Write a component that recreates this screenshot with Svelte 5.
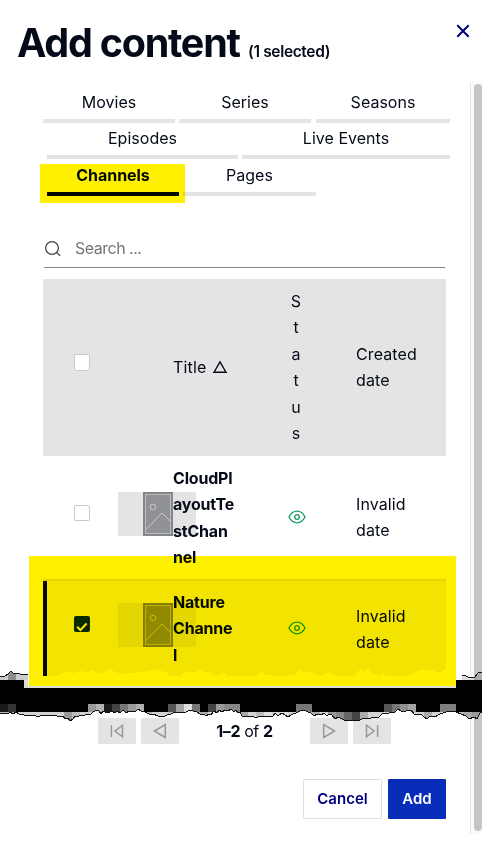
<script>
  const tabRows = [
    [{ label: 'Movies', w: 132 }, { label: 'Series', w: 132 }, { label: 'Seasons', w: 134 }],
    [{ label: 'Episodes', w: 191 }, { label: 'Live Events', w: 208 }],
    [{ label: 'Channels', w: 132, active: true }, { label: 'Pages', w: 133 }]
  ];

  const rows = [
    { title: ['CloudPl', 'ayoutTe', 'stChan', 'nel'], created: ['Invalid', 'date'], checked: false },
    { title: ['Nature', 'Channe', 'l'], created: ['Invalid', 'date'], checked: true }
  ];

  // Torn strip: vertices of the ragged lower edge as x, y pairs.
  const lower = [0,713,6,713,8,714,10,712,13,714,16,712,19,714,24,715,27,716,30,715,36,716,40,716,44,715,48,716,53,715,57,716,60,717,63,716,65,719,68,718,70,721,73,719,75,716,79,716,85,715,88,714,91,714,93,712,97,710,99,711,101,714,103,711,107,713,112,711,115,713,117,711,120,713,123,710,126,713,129,711,132,712,136,711,138,709,141,711,145,712,149,714,153,714,158,716,163,717,167,715,171,714,175,712,180,712,186,712,190,710,193,711,197,712,201,715,204,714,206,716,209,714,211,715,214,711,217,713,219,710,222,712,225,710,228,711,231,709,234,712,236,710,238,713,240,712,242,716,248,717,253,716,255,718,262,716,267,717,273,716,275,713,278,716,282,713,285,715,288,717,293,714,296,713,300,711,304,710,308,712,311,713,314,716,317,714,321,715,324,713,327,716,329,714,332,715,335,719,338,717,344,720,352,721,360,720,364,718,368,719,374,717,379,717,383,713,387,714,391,712,395,712,398,709,401,711,406,711,411,710,414,714,418,715,421,714,424,717,427,719,430,716,435,717,440,714,446,712,452,711,456,712,461,714,466,716,469,719,474,717,477,719,480,713,482,712];
  const pairs = lower.reduce((out, v, i) => out + (i % 2 ? ',' : ' ') + v, '');
  const upperBlocks = [[0,'#191919'],[8,'#333'],[88,'#999'],[96,'#b5b5b5'],[104,'#1b1b1b'],[112,'#444'],[120,'#777'],[128,'#999'],[136,'#b0b0b0'],[168,'#555'],[176,'#a5a5a5'],[184,'#ddd'],[192,'#777'],[208,'#444'],[216,'#999'],[224,'#888'],[232,'#888'],[296,'#777'],[304,'#777'],[384,'#555'],[392,'#777'],[400,'#919191'],[408,'#a4a4a4'],[440,'#808080'],[448,'#808080']];
  const lowerBlocks = [[0,'#bbb'],[8,'#aaa'],[64,'#999'],[72,'#bbb'],[144,'#aaa'],[152,'#ccc'],[168,'#bbb'],[200,'#aaa'],[240,'#aaa'],[256,'#bbb'],[264,'#ddd'],[280,'#ddd'],[312,'#aaa'],[328,'#999'],[336,'#888'],[344,'#666'],[352,'#444'],[360,'#aaa'],[424,'#aaa'],[456,'#bbb'],[464,'#aaa'],[472,'#999']];
  const ridge = 'M47,677 L56,677 60,674 66,672 75,673 80,671 87,672 93,670 98,673 105,672 110,669 117,673 124,674 133,673 141,672 150,671 154,669 160,671 167,672 170,676 180,676 183,673 189,671 194,673 200,670 206,673 210,671 214,676 220,675 223,672 227,676 255,676 258,673 262,672 266,675 273,675 278,677 294,675 298,671 301,669 304,673 310,671 314,674 321,676 325,674 329,672 333,675 354,677 358,671 361,669 364,672 368,669 373,674 380,675 383,673 387,676 408,676 414,673 420,670 433,670 436,673 441,672 446,669 V678 H47Z';
</script>

{#snippet eye()}
  <svg class="eye" width="18" height="14" viewBox="0 0 18 14"><path d="M1 7C2.5 4 5.2 1.2 9 1.2S15.5 4 17 7c-1.5 3-4.2 5.8-8 5.8S2.5 10 1 7Z" /><circle cx="9" cy="7" r="2.3" /></svg>
{/snippet}

{#snippet picture()}
  <div class="thumb">
    <svg width="30" height="44" viewBox="0 0 30 44"><rect width="30" height="44" fill="#85868a" /><rect x="2.5" y="2.5" width="25" height="39" fill="#919296" stroke="#bbbcbe" /><circle cx="10" cy="15" r="2.8" fill="none" stroke="#c9cacb" /><path d="M3 37.5 19 21l8 8" fill="none" stroke="#c9cacb" /></svg>
  </div>
{/snippet}

{#snippet arrow(back, bar)}
  <button class="page-btn" aria-label={back ? 'back' : 'forward'}>
    <svg width="20" height="16" viewBox="0 0 20 16" class:flip={!back}>
      {#if bar}<path d="M4.4 2v12M15.5 2.2v11.6L8 8Z" />{:else}<path d="M15.3 1.5v13L4.4 8Z" />{/if}
    </svg>
  </button>
{/snippet}

<div class="dialog">
  <header>
    <h1>Add content</h1><span class="count">(1 selected)</span>
    <svg class="close" width="14" height="14" viewBox="0 0 14 14"><path d="M1.3 1.3 12.7 12.7M12.7 1.3 1.3 12.7" /></svg>
  </header>
  <div class="body">
    <main>
      <nav>
        {#each tabRows as row, i}
          <div class="tabs" class:indent={i > 0}>
            {#each row as tab}<div class="tab" class:active={tab.active} style:width="{tab.w}px"><span>{tab.label}</span></div>{/each}
          </div>
        {/each}
      </nav>
      <div class="search">
        <svg width="18" height="18" viewBox="0 0 18 18"><circle cx="8" cy="8" r="6.4" /><path d="m12.7 12.7 3.5 3" /></svg>
        <span>Search ...</span>
      </div>
      <section class="table">
        <div class="row head">
          <div class="pick"><i class="box"></i></div>
          <div></div>
          <div class="heading">Title <svg width="16" height="14" viewBox="0 0 16 14"><path d="M8 1.8 14 12.2H2Z" /></svg></div>
          <div class="status">{#each 'Status'.split('') as letter}<span>{letter}</span>{/each}</div>
          <div class="date"><span>Created</span><span>date</span></div>
        </div>
        {#each rows as row}
          <div class="row item" class:selected={row.checked}>
            <div class="pick"><i class="box" class:checked={row.checked}>{#if row.checked}<svg width="16" height="16" viewBox="0 0 16 16"><path d="m3.2 10.7 3.2 3.4 6.2-6.6" /></svg>{/if}</i></div>
            <div>{@render picture()}</div>
            <div class="name">{#each row.title as part}<span>{part}</span>{/each}</div>
            <div class="visible">{@render eye()}</div>
            <div class="date"><span>{row.created[0]}</span><span>{row.created[1]}</span></div>
          </div>
        {/each}
      </section>
      <div class="pager">
        <div class="pair">{@render arrow(true, true)}{@render arrow(true, false)}</div>
        <span class="range"><b>1–2</b> of <b>2</b></span>
        <div class="pair">{@render arrow(false, false)}{@render arrow(false, true)}</div>
      </div>
      <footer><button class="cancel">Cancel</button><button class="add">Add</button></footer>
    </main>
    <div class="scroll"><div class="handle"></div></div>
  </div>

  <div class="mark tab-mark"></div>
  <div class="mark row-mark"></div>
  <svg class="tear" width="482" height="858" viewBox="0 0 482 858" shape-rendering="crispEdges">
    <defs>
      <clipPath id="strip"><polygon points="0,704 {pairs} 482,704" /></clipPath>
      <clipPath id="corners"><path d="M0 676 4 677 8 674 11 671 14 674 18 673 22 675 28 674V681H0ZM462 675 466 676 470 678 475 677 478 673 482 672V681H462Z" /></clipPath>
    </defs>
    <path d={ridge} fill="#fff000" />
    <path d="M0 680h24v8h432v-8h26v24H0Z" fill="#000" />
    <path d="M24 675h4v11h428v2H24Z" fill="#deded0" />
    <g clip-path="url(#corners)"><rect y="670" width="28" height="10" fill="#ccc" /><rect x="8" y="670" width="8" height="10" fill="#8e8e8e" /><rect x="462" y="670" width="12" height="10" fill="#ddd" /><rect x="474" y="670" width="8" height="10" fill="#aaa" /></g>
    <g clip-path="url(#strip)">
      <rect y="704" width="482" height="8" fill="#000" />
      <rect y="712" width="482" height="10" fill="#d2d2d2" />
      {#each upperBlocks as [x, fill]}<rect {x} y="704" width="8" height="8" {fill} />{/each}
      {#each lowerBlocks as [x, fill]}<rect {x} y="712" width="8" height="10" {fill} />{/each}
    </g>
    <polyline points={pairs} fill="none" stroke="#111" />
    <path d="M0 676 4 677 8 674 11 671 14 674 18 673 22 675 28 674M462 675 466 676 470 678 475 677 478 673 482 672" fill="none" stroke="#111" />
  </svg>
</div>

<style>
  :global(body) { background: #fff; overflow: hidden; }
  .dialog { position: relative; width: 482px; height: 858px; overflow: hidden; background: #fff; color: #050a18; font: 16px/26.4px Inter, "Liberation Sans", sans-serif; }
  header { height: 82px; box-sizing: border-box; padding: 19px 12px 0 17px; display: flex; align-items: baseline; white-space: nowrap; }
  h1 { margin: 0; font-size: 39.5px; line-height: 48px; font-weight: 700; letter-spacing: -1.25px; width: 223px; }
  .count { margin-left: 8px; font-size: 15.5px; font-weight: 600; letter-spacing: -0.35px; }
  .close { margin-left: auto; align-self: flex-start; margin-top: 5px; fill: none; stroke: #00007d; stroke-width: 2; }
  .body { display: flex; height: 752px; }
  main { width: 470px; box-sizing: border-box; padding: 5px 20px 0 43px; }
  .tabs { display: flex; gap: 4px; height: 36px; }
  .tabs:first-child .tab:last-child { margin-left: 1px; }
  .tabs:last-child { height: 37px; }
  .tabs.indent { padding-left: 4px; }
  .tab { box-sizing: border-box; flex: none; border-bottom: 4px solid #e4e4e4; text-align: center; padding-top: 2px; line-height: 26px; letter-spacing: 0.02px; }
  .tabs:last-child .tab { padding-top: 3px; }
  .tab.active { font-weight: 700; border-color: #050a18; letter-spacing: -0.05px; }
  .search { width: 401px; height: 37px; margin-top: 35px; margin-left: 1px; box-sizing: border-box; border-bottom: 1px solid #83858a; display: flex; align-items: center; color: #737578; }
  .search svg { margin-bottom: 1px; fill: none; stroke: #45474e; stroke-width: 1.3; }
  .search span { margin-left: 13px; margin-bottom: 2px; letter-spacing: -0.5px; }
  .table { width: 403px; height: 398px; margin-top: 11px; }
  .row { display: grid; grid-template-columns: 75px 55px 108px 75px 90px; box-sizing: border-box; }
  .row span { display: block; }
  .head { height: 177px; background: #e4e4e4; padding-top: 9px; }
  .pick { padding-left: 31px; }
  .box { display: block; box-sizing: border-box; width: 16px; height: 17px; border: 1px solid #c9c9ca; border-radius: 2px; background: #fff; }
  .head .box { margin-top: 66px; }
  .heading { padding-top: 66px; white-space: nowrap; display: flex; align-items: flex-start; gap: 6px; letter-spacing: 0.15px; }
  .heading svg { margin-top: 6px; fill: none; stroke: #050a18; stroke-width: 1.4; }
  .status { width: 30px; text-align: center; }
  .date { letter-spacing: 0.1px; }
  .head .date { padding-top: 53px; }
  .item { height: 123px; padding-top: 9px; }
  .item .box { margin-top: 40px; height: 16px; }
  .thumb { width: 78px; height: 44px; margin-top: 27px; background: #e4e4e4; display: flex; justify-content: center; position: relative; }
  .thumb svg { margin-left: 1px; }
  .name { position: relative; font-weight: 700; letter-spacing: -0.2px; }
  .visible { padding: 45px 0 0 7px; }
  .eye { display: block; fill: none; stroke: #169b62; stroke-width: 1.3; }
  .item .date { padding-top: 26px; }
  .selected { height: 97px; background: #f2f2f2; border-top: 2px solid #e4e4e4; box-shadow: inset 4px 0 #050a18; padding-top: 8px; }
  .selected .box { margin-top: 27px; background: #0a2b28; border: 0; }
  .selected .box svg { display: block; fill: none; stroke: #fff; stroke-width: 2; }
  .selected .thumb { margin-top: 14px; }
  .selected .visible { padding-top: 32px; }
  .selected .date { padding-top: 14px; }
  .pager { width: 293px; height: 26px; margin: 41px 0 0 55px; display: flex; justify-content: space-between; align-items: center; }
  .pair { display: flex; gap: 5px; }
  .page-btn { width: 38px; height: 26px; padding: 0; border: 0; background: #e4e4e4; border-radius: 1px; display: flex; align-items: center; justify-content: center; }
  .page-btn svg { fill: none; stroke: #96989b; stroke-width: 1.5; }
  .flip { transform: scaleX(-1); }
  .range { letter-spacing: -0.4px; }
  footer { display: flex; gap: 6px; margin-top: 35px; padding-left: 260px; }
  footer button { height: 40px; padding: 0 0 1px; border-radius: 1px; font: 600 15px Inter, "Liberation Sans", sans-serif; }
  .cancel { width: 79px; border: 1px solid #dfdfdf; background: #fff; color: #00007d; }
  .add { width: 58px; border: 0; background: #082db9; color: #fff; }
  .scroll { width: 12px; box-sizing: border-box; border-left: 1px solid #e8e8e8; background: #fafafa; padding: 2px 0 3px 3px; }
  .handle { height: 747px; width: 8px; border-radius: 4px; background: #c5c5c5; }
  .mark { position: absolute; background: #fff000; mix-blend-mode: multiply; }
  .tab-mark { left: 40px; top: 164px; width: 145px; height: 39px; }
  .row-mark { left: 28.6px; top: 556px; width: 427.4px; height: 130px; }
  .tear { position: absolute; left: 0; top: 0; pointer-events: none; }
</style>
